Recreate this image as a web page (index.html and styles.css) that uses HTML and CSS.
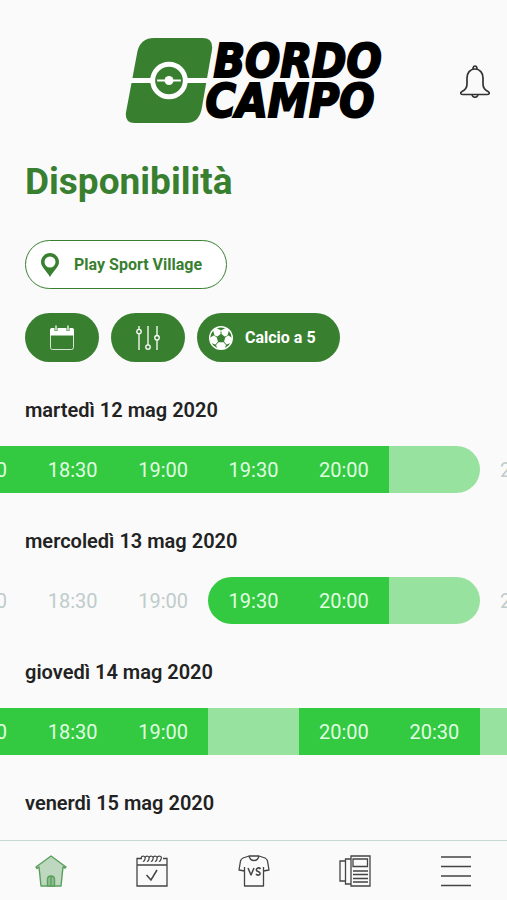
FILE: index.html
```html
<!DOCTYPE html>
<html lang="it">
<head>
<meta charset="utf-8">
<meta name="viewport" content="width=device-width, initial-scale=1">
<title>Bordo Campo</title>
<link rel="stylesheet" href="styles.css">
</head>
<body>
<div class="app">
  <header class="top">
    <div class="logo">
      <svg class="logo-mark" viewBox="0 0 88 86" aria-hidden="true">
        <path fill="#388030" d="M29 0H78Q89 0 87.500 12L77 72Q74 86 61 86H9Q-1 86 .5 75L12 14Q15 0 29 0Z"/>
        <path stroke="#fff" stroke-width="5" d="M5 43H83"/>
        <circle cx="44" cy="43" r="16.500" fill="#388030" stroke="#fff" stroke-width="5"/>
        <path stroke="#fff" stroke-width="2" d="M32 43H56"/>
        <circle cx="44" cy="43" r="4.500" fill="#fff"/>
      </svg>
      <div class="logo-name"><span class="logo-first">BORDO</span><span>CAMPO</span></div>
    </div>
    <button class="bell" aria-label="Notifiche">
      <svg width="32" height="34" viewBox="0 0 32 34" fill="none" stroke="#333" stroke-width="1.700" stroke-linejoin="round">
        <path d="M16 5C11 5 8 9 8 14V20C8 24 6 26 3 27.500C.5 29 2 30.500 4 30.500H28C30 30.500 31.500 29 29 27.500C26 26 24 24 24 20V14C24 9 21 5 16 5Z"/>
        <path d="M14 5C14 1 18 1 18 5M13 31C14 34 18 34 19 31"/>
      </svg>
    </button>
  </header>
  <main class="content">
    <h1>Disponibilità</h1>
    <div class="filters">
      <button class="pill place">
        <svg width="18" height="24" viewBox="0 0 18 24"><path fill="#388030" fill-rule="evenodd" d="M9 0C4 0 0 4 0 9C0 14 5 17 9 24C13 17 18 14 18 9C18 4 14 0 9 0ZM9 3.500A5.500 5.500 0 1 1 9 14.500A5.500 5.500 0 1 1 9 3.500Z"/></svg>
        <span>Play Sport Village</span>
      </button>
    </div>
    <div class="filters">
      <button class="pill icon-pill" aria-label="Data">
        <svg width="26" height="26" viewBox="0 0 26 26"><rect x="1.500" y="3.500" width="23" height="21" rx="2" fill="none" stroke="#fff" stroke-opacity=".8"/><path fill="#fff" d="M1 5Q1 3 3 3H23Q25 3 25 5V10.500H1Z"/><path stroke="#388030" stroke-width="3" d="M7 1V6M19 1V6"/><path stroke="#fff" stroke-width="1.300" stroke-linecap="round" d="M7 1V5M19 1V5"/></svg>
      </button>
      <button class="pill icon-pill" aria-label="Filtri">
        <svg width="26" height="26" viewBox="0 0 26 26" fill="none" stroke="#fff" stroke-width="1.300"><path d="M4 1V4.500M4 9V25M13 1V20M22 1V10.500M22 15V25"/><circle cx="4" cy="6.500" r="2.200"/><circle cx="13" cy="22" r="2.200"/><circle cx="22" cy="12.700" r="2.200"/></svg>
      </button>
      <button class="pill sport">
        <svg width="24" height="24" viewBox="0 0 24 24"><circle cx="12" cy="12" r="11.300" fill="#388030" stroke="#fff" stroke-width="1.400"/><g fill="#fff"><path d="M7.500 2L12 4.500L16.500 2L20 4L18.500 9.500L15.500 10.500L12.500 8V5.500H11.500V8L8.500 10.500L5.500 9.500L4 4Z"/><path d="M.8 12L4.500 9.500L7.500 11L9 15.500L6.500 18.500L2 17Z"/><path d="M23.200 12L19.500 9.500L16.500 11L15 15.500L17.500 18.500L22 17Z"/><path d="M9.500 16.200H14.500L17 19L15.500 23H8.500L7 19Z"/></g></svg>
        <span>Calcio a 5</span>
      </button>
    </div>

    <section class="day">
      <h2>martedì 12 mag 2020</h2>
      <div class="window"><div class="strip">
        <button class="slot free">18:00</button><button class="slot free">18:30</button><button class="slot free">19:00</button><button class="slot free">19:30</button><button class="slot free">20:00</button><span class="slot partial end"></span><button class="slot" disabled>21:00</button>
      </div></div>
    </section>
    <section class="day">
      <h2>mercoledì 13 mag 2020</h2>
      <div class="window"><div class="strip">
        <button class="slot" disabled>18:00</button><button class="slot" disabled>18:30</button><button class="slot" disabled>19:00</button><button class="slot free start">19:30</button><button class="slot free">20:00</button><span class="slot partial end"></span><button class="slot" disabled>21:00</button>
      </div></div>
    </section>
    <section class="day">
      <h2>giovedì 14 mag 2020</h2>
      <div class="window"><div class="strip">
        <button class="slot free">18:00</button><button class="slot free">18:30</button><button class="slot free">19:00</button><span class="slot partial"></span><button class="slot free">20:00</button><button class="slot free">20:30</button><span class="slot partial"></span>
      </div></div>
    </section>
    <section class="day">
      <h2>venerdì 15 mag 2020</h2>
    </section>
  </main>
  <nav class="tabs">
    <a href="#home" aria-label="Home">
      <svg width="32" height="32" viewBox="0 0 32 32" fill="none" stroke="#5a9f5c" stroke-width="1.400" stroke-linejoin="round"><path fill="#bdd8be" d="M4 12L6 31H26L28 12L30 13L31 12L16 1L1 12L2 13.500Z"/><path fill="#8fbf90" d="M12.500 31V24.500Q12.500 21 16 21T19.500 24.500V31ZM16 21V31"/></svg>
    </a>
    <a href="#prenotazioni" aria-label="Prenotazioni">
      <svg width="32" height="32" viewBox="0 0 32 32" fill="none" stroke="#444" stroke-width="1.300"><path d="M6 3.500H1V31H31V3.500H27M1 10H31"/><path stroke-width="1.200" d="M5 3C6 0 10 1 9 4Q8 7 7 6M9 3C10 0 14 1 13 4Q12 7 11 6M13 3C14 0 18 1 17 4Q16 7 15 6M17 3C18 0 22 1 21 4Q20 7 19 6M21 3C22 0 27 1 25 4Q24 7 23 6"/><path stroke-width="1.500" d="M10.500 20L15 25L21 15"/></svg>
    </a>
    <a href="#sfide" aria-label="Sfide">
      <svg width="32" height="32" viewBox="0 0 32 32" fill="none" stroke="#444" stroke-width="1.300" stroke-linejoin="round"><path d="M11 1L5 3Q3 4 2.500 6L1 15L6.500 16V31H25.500V16L31 15L29.500 6Q29 4 27 3L21 1Q20 5.500 16 5.500T11 1ZM11 1H21M6.500 16V12M25.500 16V12"/><path stroke-width="1.500" d="M10 13L13 20L16 13M22.500 14Q21.500 12.500 20 13C17.500 14 18 16 20 16.500S23 19 21 20Q19 20.500 18 19"/></svg>
    </a>
    <a href="#notizie" aria-label="Notizie">
      <svg width="32" height="32" viewBox="0 0 32 32" fill="none" stroke="#444" stroke-width="1.300"><path d="M12 1H31V31H12ZM12 4H6.500V29H12M6.500 6H1V26H6.500M14 4H28.500V11.500H14ZM14 16H29M14 19.500H29M14 23.500H29M14 27H29"/></svg>
    </a>
    <a href="#menu" aria-label="Menu">
      <svg width="32" height="32" viewBox="0 0 32 32" stroke="#444" stroke-width="1.500"><path d="M1 2H31M1 11.500H31M1 21H31M1 30.500H31"/></svg>
    </a>
  </nav>
</div>
</body>
</html>
```
FILE: styles.css
```css
* { box-sizing: border-box; }

body {
  margin: 0;
  background: #fafafa;
  color: #222;
  font-family: Roboto, "Liberation Sans", sans-serif;
}

button {
  border: 0;
  padding: 0;
  background: none;
  font: inherit;
}

svg { display: block; }

.app {
  display: flex;
  flex-direction: column;
  height: 100vh;
}

.top {
  display: grid;
  grid-template-columns: 1fr auto 1fr;
  align-items: center;
  padding: 38px 16px 0;
}

.logo {
  grid-column: 2;
  display: flex;
  align-items: center;
}

.logo-mark {
  width: 88px;
  height: 85px;
}

.logo-name {
  display: flex;
  flex-direction: column;
  margin-left: -8px;
  color: #000;
  font-family: "DejaVu Sans Condensed", "DejaVu Sans", sans-serif;
  font-size: 46px;
  font-style: italic;
  font-weight: 700;
  line-height: 40px;
  -webkit-text-stroke: 2px #000;
}

.logo-first { padding-left: 8px; }

.bell { justify-self: end; }

.content {
  flex: 1;
  min-height: 0;
  overflow: hidden;
}

h1 {
  margin: 37px 25px 36px;
  color: #388030;
  font-size: 37px;
  font-weight: 700;
  line-height: 44px;
}

.filters {
  display: flex;
  gap: 12px;
  margin: 0 25px 24px;
}

.pill {
  display: flex;
  align-items: center;
  height: 49px;
  border-radius: 25px;
  background: #388030;
  color: #fff;
  font-size: 16px;
  font-weight: 700;
}

.place {
  gap: 15px;
  padding: 0 24px 0 15px;
  border: 1px solid #388030;
  background: #fff;
  color: #388030;
}

.icon-pill {
  justify-content: center;
  width: 74px;
}

.sport {
  gap: 12px;
  padding: 0 24px 0 12px;
}

.day { margin: 36px 0; }

h2 {
  margin: 0 25px 24px;
  font-size: 20px;
  font-weight: 600;
  line-height: 24px;
}

.window { overflow: hidden; }

.strip {
  display: grid;
  grid-template-columns: repeat(7, 1fr);
  height: 47px;
  margin: 0 -63px;
}

.slot {
  color: #bfcccb;
  font-size: 20px;
}

.free {
  background: #33c941;
  color: #e0ffe2;
}

.partial { background: #98e29f; }

.start { border-radius: 24px 0 0 24px; }

.end { border-radius: 0 24px 24px 0; }

.tabs {
  display: flex;
  height: 60px;
  border-top: 1px solid #c5dbd0;
}

.tabs a {
  flex: 1;
  display: flex;
  align-items: center;
  justify-content: center;
}
```
